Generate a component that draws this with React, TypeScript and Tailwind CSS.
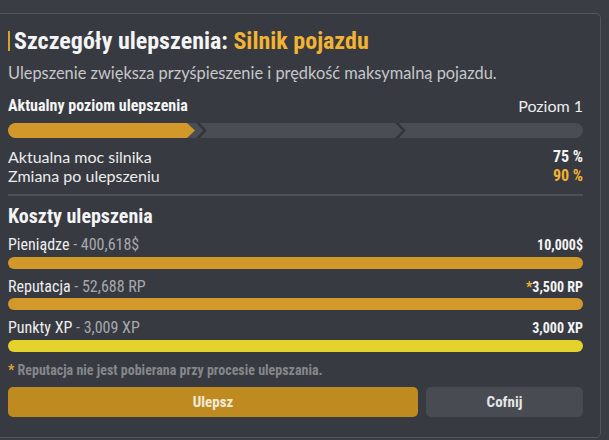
const narrow = "font-['Roboto','DejaVu_Sans_Condensed',sans-serif] [font-stretch:75%]";
const body = "font-['Lato','Open_Sans',sans-serif]";

type Cost = {
    label: string;
    owned: string;
    price: string;
    bar: string;
    starred?: boolean;
};

const costs: Cost[] = [
    { label: "Pieniądze", owned: "400,618$", price: "10,000$", bar: "bg-[#d3982a]" },
    { label: "Reputacja", owned: "52,688 RP", price: "3,500 RP", bar: "bg-[#d3982a]", starred: true },
    { label: "Punkty XP", owned: "3,009 XP", price: "3,000 XP", bar: "bg-[#e6d22c]" },
];

// three step level bar, first step filled
const LevelBar = () => (
    <div className="relative mt-[7px] h-[15px] w-full overflow-hidden rounded-full bg-[#4a4d54]">
        <div className="h-full w-[187px] bg-[#d3982a] [clip-path:polygon(0_0,calc(100%-8px)_0,100%_50%,calc(100%-8px)_100%,0_100%)]" />
        <svg className="absolute inset-0" width="574" height="15" viewBox="0 0 574 15">
            <polyline points="189,-1 197,7.5 189,16" fill="none" stroke="#31343a" strokeWidth="2.5" />
            <polyline points="388,-1 396,7.5 388,16" fill="none" stroke="#31343a" strokeWidth="2.5" />
        </svg>
    </div>
);

export default function App() {
    return (
        <div className="h-[440px] w-[609px] overflow-hidden bg-[#3a3d44]">
            <div className="mt-[13px] -ml-[6px] h-[425px] w-[607px] rounded-[5px] border border-[#53565d] bg-[#373a41] pl-[13px] pr-[17px]">
                <h1 className={`${narrow} mt-[14px] flex h-[26px] items-center text-[24px] font-bold leading-[26px] text-[#f4f4f4]`}>
                    <span className="mr-[4px] h-[20px] w-[2px] bg-[#d9a02a]" />
                    Szczegóły ulepszenia:&nbsp;<span className="text-[#f2b232]">Silnik pojazdu</span>
                </h1>
                <p className={`${body} mt-[9px] h-[20px] text-[16.4px] leading-[20px] text-[#c6c7c9]`}>
                    Ulepszenie zwiększa przyśpieszenie i prędkość maksymalną pojazdu.
                </p>

                <div className="mt-[13px] flex h-[20px] items-center justify-between leading-[20px]">
                    <span className={`${narrow} text-[16px] font-bold text-[#f4f4f4]`}>Aktualny poziom ulepszenia</span>
                    <span className={`${body} text-[16px] text-[#ececec]`}>Poziom 1</span>
                </div>
                <LevelBar />

                <div className="mt-[9px] flex h-[19px] items-center justify-between leading-[19px]">
                    <span className={`${body} text-[16px] text-[#ececec]`}>Aktualna moc silnika</span>
                    <span className={`${narrow} text-[16px] font-bold text-[#f4f4f4]`}>75 %</span>
                </div>
                <div className="flex h-[20px] items-center justify-between leading-[20px]">
                    <span className={`${body} text-[16px] text-[#ececec]`}>Zmiana po ulepszeniu</span>
                    <span className={`${narrow} text-[16px] font-bold text-[#f2b232]`}>90 %</span>
                </div>

                <div className="mt-[8px] h-[2px] bg-[#4d5057]" />

                <h2 className={`${narrow} mt-[8px] h-[24px] text-[20px] font-bold leading-[24px] text-[#f4f4f4]`}>
                    Koszty ulepszenia
                </h2>

                {costs.map((c, i) => (
                    <div key={c.label} className={i === 0 ? "mt-[7px]" : "mt-[8px]"}>
                        <div className="flex h-[20px] items-center justify-between leading-[20px]">
                            <span className={`${narrow} text-[16px] text-[#eeeeee]`}>
                                {c.label} <span className="text-[#a7a9ad]">- {c.owned}</span>
                            </span>
                            <span className={`${narrow} text-[14px] font-bold text-[#f4f4f4]`}>
                                {c.starred && <span className="text-[#f2b232]">*</span>}
                                {c.price}
                            </span>
                        </div>
                        <div className={`${i === 1 ? "mt-[1px]" : "mt-[2px]"} h-[12px] rounded-full ${c.bar}`} />
                    </div>
                ))}

                <p className={`${narrow} mt-[9px] h-[18px] text-[14px] font-bold leading-[18px] text-[#85878b]`}>
                    <span className="text-[#e0a52c]">*</span> Reputacja nie jest pobierana przy procesie ulepszania.
                </p>

                <div className="mt-[8px] flex h-[30px] gap-[8px]">
                    <button className={`${narrow} w-[410px] rounded-[5px] bg-[#bf8a20] text-[15px] font-bold text-[#f1ead8]`}>
                        Ulepsz
                    </button>
                    <button className={`${narrow} flex-1 rounded-[5px] bg-[#484b52] text-[15px] font-bold text-[#e6e6e6]`}>
                        Cofnij
                    </button>
                </div>
            </div>
        </div>
    );
}
